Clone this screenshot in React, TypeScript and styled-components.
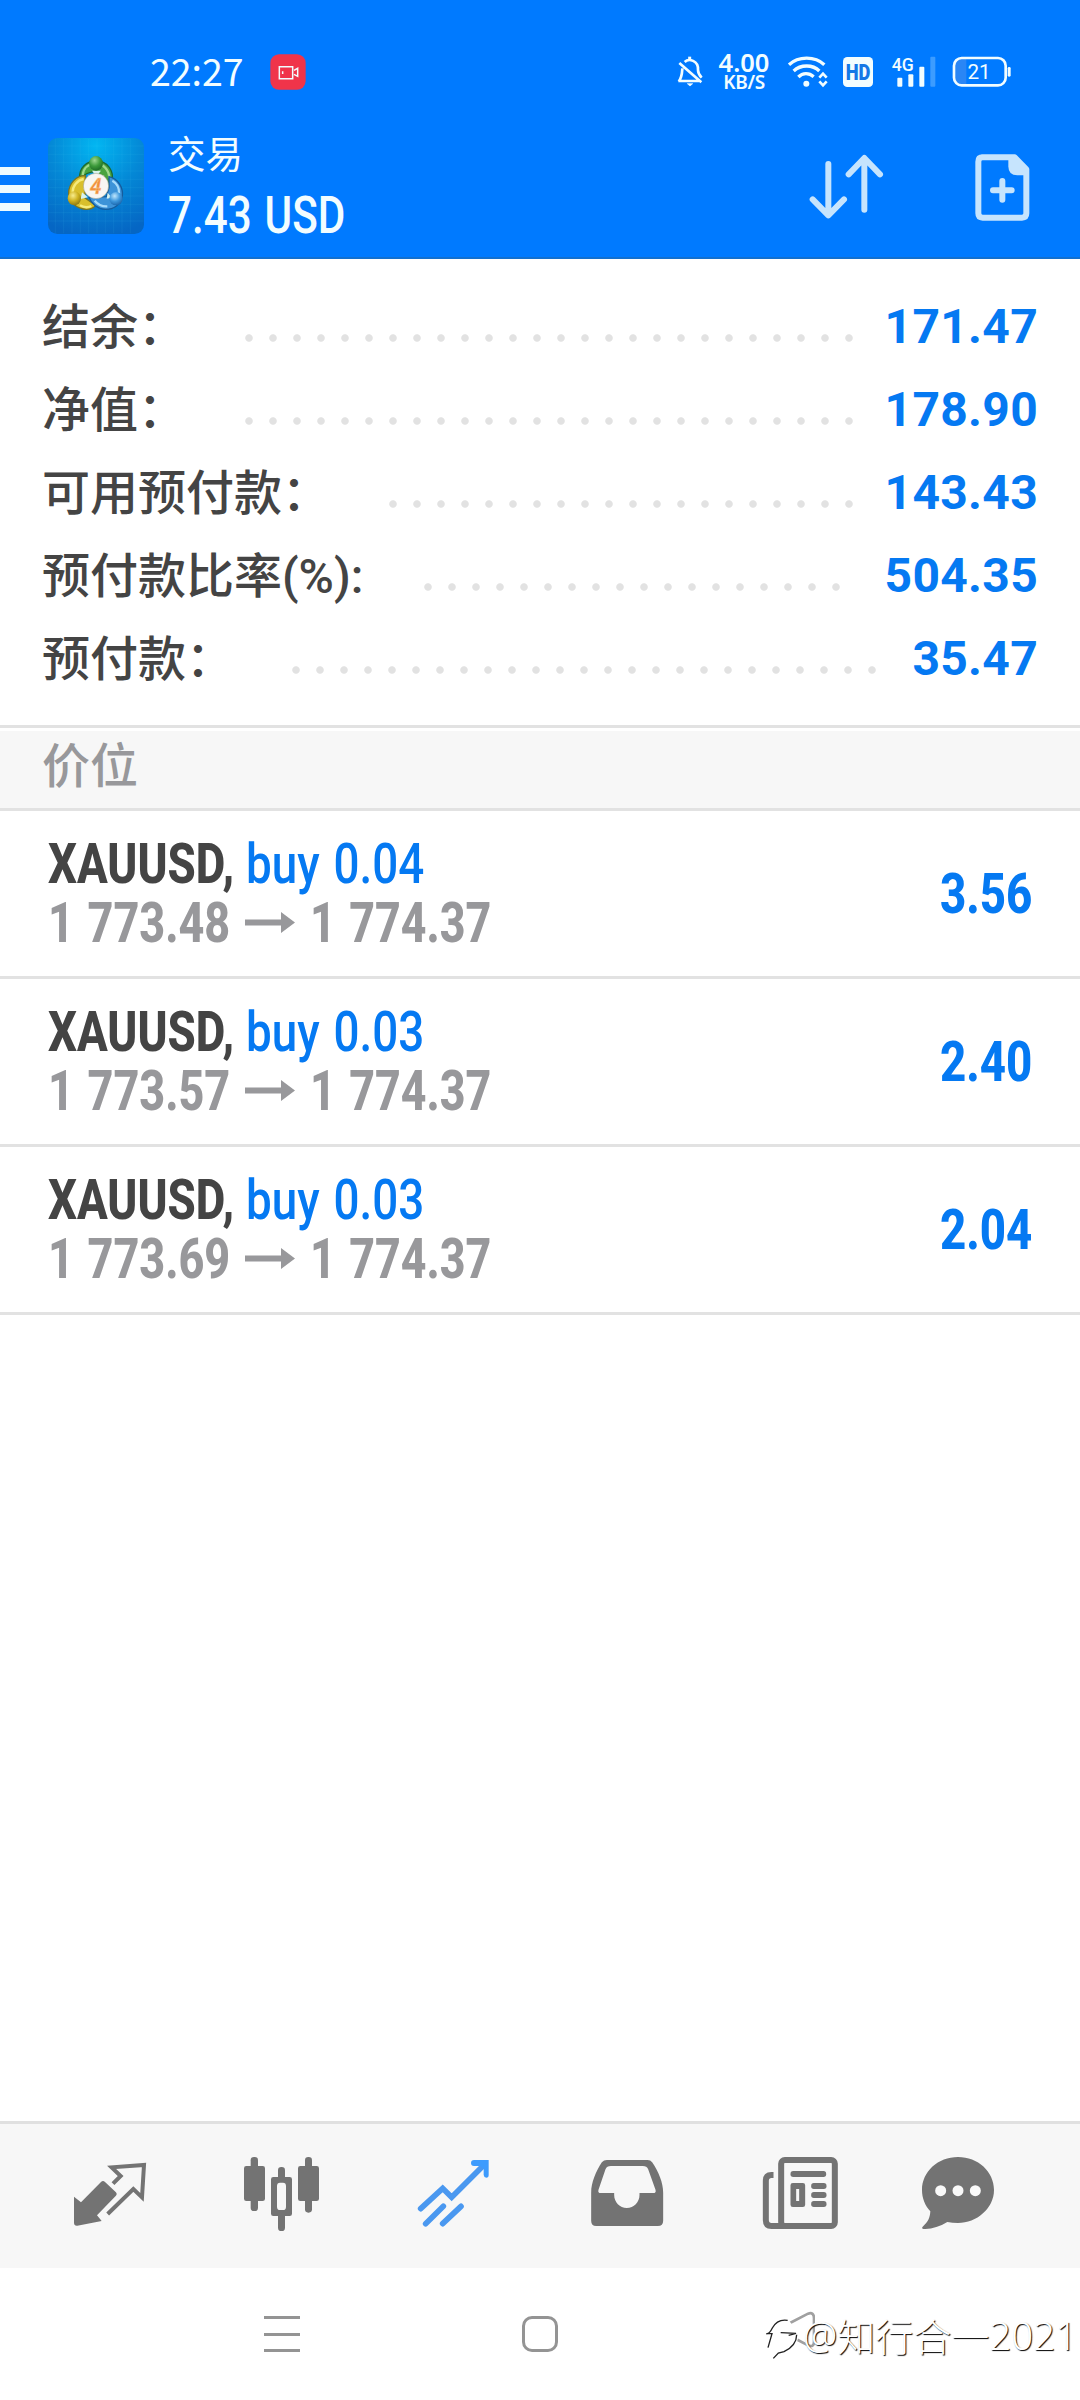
import React, { useLayoutEffect, useRef, useState } from "react";
import styled, { createGlobalStyle } from "styled-components";

const GlobalStyle = createGlobalStyle`
  * { box-sizing: border-box; }
  body { margin: 0; background: #fff; }
`;

const cjk = `"Noto Sans CJK SC", sans-serif`;
const roboto = `Roboto, "Noto Sans CJK SC", sans-serif`;

const Screen = styled.div`
  display: flex;
  flex-direction: column;
  width: 1080px;
  height: 2400px;
  overflow: hidden;
  background: #fff;
  font-family: ${roboto};
`;

/* ---------- condensed text ---------- */

const FitBox = styled.span<{ $w: number }>`
  display: inline-block;
  width: ${(p) => p.$w}px;
  white-space: pre;
`;
const FitInner = styled.span`
  display: inline-block;
  transform-origin: 0 50%;
  word-spacing: 3px;
`;

function Condensed({ width, children }: { width: number; children: React.ReactNode }) {
  const ref = useRef<HTMLSpanElement>(null);
  const [scale, setScale] = useState(0.84);
  useLayoutEffect(() => {
    if (ref.current && ref.current.offsetWidth) setScale(width / ref.current.offsetWidth);
  }, [width, children]);
  return (
    <FitBox $w={width}>
      <FitInner ref={ref} style={{ transform: `scaleX(${scale})` }}>
        {children}
      </FitInner>
    </FitBox>
  );
}

/* ---------- header ---------- */

const Top = styled.header`
  height: 259px;
  flex: none;
  background: #007aff;
  border-bottom: 2px solid #1270cf;
  color: #f2fdff;
`;
const StatusBar = styled.div`
  display: flex;
  align-items: center;
  height: 108px;
  padding: 36px 0 0 150px;
`;
const Clock = styled.span`
  width: 120px;
  padding-bottom: 4px;
  font: 400 37.5px/68px ${cjk};
`;
const StatusIcons = styled.div`
  display: flex;
  align-items: center;
  margin-left: auto;
  padding-right: 68px;
`;
const Speed = styled.div`
  display: flex;
  flex-direction: column;
  align-items: center;
  width: 54px;
  margin: -1px 16px 0 13px;
  font: 600 25.5px/20px "Noto Sans", sans-serif;
`;
const SpeedUnit = styled.span`
  margin-top: 1px;
  font-size: 19px;
  line-height: 19px;
  letter-spacing: -0.3px;
`;
const HeaderRow = styled.div`
  display: flex;
  align-items: flex-start;
  height: 149px;
`;
const Menu = styled.div`
  display: grid;
  gap: 10px;
  width: 30px;
  margin-top: 59px;
`;
const MenuLine = styled.i`
  height: 8px;
  background: #ecfbff;
`;
const AppIcon = styled.svg`
  width: 96px;
  height: 96px;
  margin: 30px 0 0 18px;
`;
const Titles = styled.div`
  display: flex;
  flex-direction: column;
  margin: 21px 0 0 24px;
`;
const Title = styled.div`
  height: 55px;
  font: 400 37.5px/46px ${cjk};
`;
const Profit = styled.div`
  font: 500 51px/64px ${roboto};
`;
const Actions = styled.div`
  display: flex;
  gap: 85px;
  margin: 43.5px 48px 0 auto;
`;

const svgProps = { fill: "none", stroke: "currentColor" };

function StatusBarView() {
  return (
    <StatusBar>
      <Clock>22:27</Clock>
      <svg width="36" height="36" viewBox="810 72 108 108" {...svgProps}>
        <rect x="811" y="73" width="106" height="106" rx="26" fill="#f0344a" stroke="none" />
        <path d="M838 110h40v36h-40zM848 124v8M882 121l11-6v24l-11-6" strokeWidth="4.5" />
      </svg>
      <StatusIcons>
        <svg width="28" height="34" viewBox="50 46 84 102" {...svgProps}>
          <path d="M57 124h62M58 125c10-11 10-22 11-39M76 67c12-12 42-5 40 24 0 10 3 15 11 23M60 70l66 58" strokeWidth="8" />
          <path d="M84 132h16l-8 7z" fill="currentColor" strokeWidth={2} />
          <path d="M91 51v9" strokeWidth="9" />
        </svg>
        <Speed>
          4.00
          <SpeedUnit>KB/S</SpeedUnit>
        </Speed>
        <svg width="41" height="34" viewBox="380 46 123 102" {...svgProps}>
          <path d="M386 75c28-26 78-26 106 0M400 94c21-20 57-20 77 0M414 112c13-13 32-13 46-1" strokeWidth="10" />
          <circle cx="438" cy="132" r="9" fill="currentColor" stroke="none" />
          <path d="M477 114l11-12 11 12M477 125l11 12 11-12" strokeWidth="8" />
        </svg>
        <svg width="30" height="30" viewBox="549 51 90 90" style={{ marginLeft: 15 }}>
          <rect x="549" y="51" width="90" height="90" rx="13" fill="#f2fdff" />
          <text x="594" y="119" textAnchor="middle" fontFamily="Roboto, sans-serif" fontWeight="900" fontSize="64" textLength="74" lengthAdjust="spacingAndGlyphs" fill="#1478e6">
            HD
          </text>
        </svg>
        <svg width="45" height="44" viewBox="692 31 135 132" style={{ marginLeft: 18 }}>
          <text x="694" y="95" fontFamily="Roboto, sans-serif" fontWeight="500" fontSize="56" textLength="66" lengthAdjust="spacingAndGlyphs" fill="#f2fdff">
            4G
          </text>
          <g fill="#f2fdff">
            <rect x="711" y="114" width="15" height="27" rx="3" />
            <rect x="744" y="104" width="15" height="37" rx="3" />
            <rect x="777" y="81" width="15" height="60" rx="3" />
          </g>
          <rect x="810" y="51" width="15" height="90" rx="3" fill="#3c9cff" />
        </svg>
        <svg width="60" height="34" viewBox="877 46 180 102" style={{ marginLeft: 16 }} {...svgProps}>
          <path d="M904 58h16v76h-16c-12 0-17-7-17-17V75c0-10 5-17 17-17" fill="#2a86f5" stroke="none" />
          <rect x="883" y="55" width="155" height="82" rx="23" strokeWidth="8" />
          <rect x="1044" y="82" width="9" height="29" rx="4" fill="currentColor" stroke="none" />
          <text x="958" y="118" textAnchor="middle" fontFamily="Roboto, sans-serif" fontSize="62" fill="#f2fdff" stroke="none">
            21
          </text>
        </svg>
      </StatusIcons>
    </StatusBar>
  );
}

function AppLogo() {
  return (
    <AppIcon viewBox="24 26 288 288">
      <defs>
        <radialGradient id="sky" cx="50%" cy="8%" r="95%">
          <stop offset="0" stopColor="#02b6f2" />
          <stop offset="0.5" stopColor="#0488d6" />
          <stop offset="1" stopColor="#0566c4" />
        </radialGradient>
        <radialGradient id="green" cx="40%" cy="30%" r="80%">
          <stop offset="0" stopColor="#9ed890" />
          <stop offset="0.5" stopColor="#3c9a3a" />
          <stop offset="1" stopColor="#176020" />
        </radialGradient>
        <radialGradient id="gold" cx="40%" cy="30%" r="80%">
          <stop offset="0" stopColor="#f8ec8c" />
          <stop offset="0.5" stopColor="#cdb01e" />
          <stop offset="1" stopColor="#7c6a10" />
        </radialGradient>
        <radialGradient id="azure" cx="40%" cy="30%" r="80%">
          <stop offset="0" stopColor="#bfe6fc" />
          <stop offset="0.5" stopColor="#3d97dc" />
          <stop offset="1" stopColor="#12599f" />
        </radialGradient>
      </defs>
      <rect x="24" y="26" width="288" height="288" rx="28" fill="url(#sky)" />
      <path
        d="M46 28v284M71 28v284M96 28v284M121 28v284M146 28v284M171 28v284M196 28v284M221 28v284M246 28v284M271 28v284M25 50h286M25 75h286M25 100h286M25 125h286M25 150h286M25 175h286M25 200h286M25 225h286M25 250h286M25 275h286"
        stroke="#5cd4f5"
        strokeOpacity="0.14"
        strokeWidth="2"
      />
      <path d="M119 150c-4-36 22-55 50-55 34 0 54 30 47 62-3 17-10 23-18 30l-30-60c-20 0-38 10-49 23z" fill="#49a33f" stroke="#1c6a31" strokeWidth="4" />
      <path d="M128 138c2-22 18-34 38-35 26 0 41 20 42 42" fill="none" stroke="#9fd88c" strokeWidth="7" />
      <path d="M136 139c-28-1-50 25-50 52 0 29 27 49 54 49 15 0 22-6 27-12l-32-22z" fill="#d9bf2c" stroke="#7b7421" strokeWidth="4" />
      <path d="M131 149c-20 4-34 22-33 40M120 228c12 7 24 7 34 2" fill="none" stroke="#f6ea7b" strokeWidth="7" />
      <path d="M207 142c28 7 43 33 40 58-4 26-26 40-50 40-24-1-43-16-50-36l52-2 8-28z" fill="#3c93d8" stroke="#155c9d" strokeWidth="4" />
      <path d="M217 154c14 8 21 22 20 38M164 214c10 12 22 18 38 17" fill="none" stroke="#a5dafa" strokeWidth="7" />
      <path d="M156 124h27l-10 12h-8zM126 189l18 15-22 5zM203 190l12 15-15 3z" fill="#d7f2ee" />
      <ellipse cx="168" cy="102" rx="21" ry="22" fill="url(#green)" />
      <ellipse cx="103" cy="207" rx="20" ry="21" fill="url(#gold)" />
      <ellipse cx="228" cy="208" rx="20" ry="20" fill="url(#azure)" />
      <circle cx="168" cy="170" r="38" fill="#f8f6f3" stroke="#7d7d66" strokeOpacity="0.6" strokeWidth="2" />
      <text x="167" y="193" textAnchor="middle" fontFamily="Roboto, sans-serif" fontStyle="italic" fontWeight="700" fontSize="64" fill="#f0913d" stroke="#fbd3a6" strokeWidth="1">
        4
      </text>
    </AppIcon>
  );
}

/* ---------- account summary ---------- */

const Summary = styled.section`
  flex: none;
  height: 466px;
  padding: 25px 42px 0 42px;
`;
const SummaryRow = styled.div`
  display: flex;
  align-items: center;
  height: 83px;
`;
const Label = styled.span`
  padding-top: 4px;
  font: 500 48px/79px ${roboto};
  color: #444;
`;
const Dots = styled.i<{ $count: number; $gap: number }>`
  width: ${(p) => p.$count * 24}px;
  height: 8px;
  margin: 25px ${(p) => p.$gap}px 0 auto;
  background: radial-gradient(circle at 12px 4px, #e2e2e2 3.3px, transparent 4.2px) 0 0 / 24px 8px repeat-x;
`;
const Value = styled.span`
  padding-top: 2px;
  font: 700 48px/81px ${roboto};
  letter-spacing: 0.3px;
  color: #0579f2;
`;

const summary = [
  { label: "结余：", value: "171.47", dots: 26, gap: 24 },
  { label: "净值：", value: "178.90", dots: 26, gap: 24 },
  { label: "可用预付款：", value: "143.43", dots: 20, gap: 24 },
  { label: "预付款比率(%):", value: "504.35", dots: 18, gap: 37 },
  { label: "预付款：", value: "35.47", dots: 25, gap: 28 },
];

/* ---------- positions ---------- */

const SectionHead = styled.div`
  flex: none;
  height: 86px;
  padding-left: 42px;
  border-top: 3px solid #e2e2e2;
  border-bottom: 3px solid #e2e2e2;
  background: linear-gradient(#fff 3px, #f7f7f7 3px);
  font: 500 48px/69px ${cjk};
  color: #98989b;
`;
const Position = styled.div`
  display: flex;
  align-items: center;
  flex: none;
  height: 168px;
  padding: 0 48px 0 48px;
  border-bottom: 3px solid #e2e2e2;
  font-size: 55px;
  line-height: 59px;
  font-weight: 800;
`;
const Details = styled.div`
  flex: 1;
`;
const Line = styled.div<{ $muted?: boolean }>`
  display: flex;
  align-items: center;
  gap: 12px;
  height: 59px;
  color: ${(p) => (p.$muted ? "#98989b" : "#444")};
`;
const Side = styled.span`
  font-weight: 500;
  color: #0579f2;
`;
const Gain = styled.span`
  padding-top: 2px;
  color: #0579f2;
`;
const Arrow = styled.svg`
  width: 50px;
  height: 21px;
  margin: -2px 3px 0 3px;
`;

const positions = [
  { volume: "0.04", open: "1 773.48", gain: "3.56" },
  { volume: "0.03", open: "1 773.57", gain: "2.40" },
  { volume: "0.03", open: "1 773.69", gain: "2.04" },
];

/* ---------- bottom bars ---------- */

const Spacer = styled.div`
  flex: 1;
`;
const Tabs = styled.nav`
  display: grid;
  grid-template-columns: 172px 172px 172px 173px 173px 144px;
  place-items: center;
  flex: none;
  height: 147px;
  padding-left: 24px;
  border-top: 3px solid #e0e0e0;
  background: #f7f7f7;
`;
const TabIcon = styled.svg<{ $active?: boolean }>`
  width: 90px;
  height: 90px;
  color: ${(p) => (p.$active ? "#4a98f0" : "#737373")};
`;
const SystemNav = styled.div`
  display: flex;
  align-items: flex-start;
  flex: none;
  height: 132px;
  padding-left: 264px;
`;
const Recents = styled.div`
  display: flex;
  flex: none;
  flex-direction: column;
  justify-content: space-between;
  width: 36px;
  height: 36px;
  margin-top: 48px;
`;
const RecentsLine = styled.i`
  height: 3px;
  background: #949494;
`;
const Home = styled.div`
  flex: none;
  width: 36px;
  height: 36px;
  margin: 48px 0 0 222px;
  border: 3px solid #949494;
  border-radius: 10px;
`;
const Watermark = styled.div`
  display: flex;
  flex: none;
  align-items: center;
  height: 56px;
  margin: 39px 0 0 207px;
  color: #fff;
  font: 300 38.5px/56px "Noto Sans", sans-serif;
  text-shadow: 1px 1px 1px #000;
  white-space: nowrap;
`;
const WatermarkName = styled.span`
  font: 300 38px/56px ${cjk};
`;

export default function App() {
  return (
    <Screen>
      <GlobalStyle />
      <Top>
        <StatusBarView />
        <HeaderRow>
          <Menu>
            <MenuLine />
            <MenuLine />
            <MenuLine />
          </Menu>
          <AppLogo />
          <Titles>
            <Title>交易</Title>
            <Profit>
              <Condensed width={177}>7.43 USD</Condensed>
            </Profit>
          </Titles>
          <Actions>
            <svg width="80" height="70" viewBox="440 335 240 210" fill="none" stroke="#c6e4fd" strokeWidth="18" strokeLinecap="round" strokeLinejoin="round">
              <path d="M504 371v152M457 477l47 48 47-48M612 508V356M565 402l47-49 47 49" />
            </svg>
            <svg width="60" height="70" viewBox="935 335 180 210" fill="none" stroke="#c6e4fd">
              <path d="M965 351h98l35 36v132q0 13-13 13H967q-13 0-13-13V364q0-13 13-13z" strokeWidth="18" strokeLinejoin="round" />
              <path d="M1044 352v26q0 27 27 27h28v-20l-33-33z" fill="#c6e4fd" stroke="none" />
              <path d="M1026 422v56M998 450h56" strokeWidth="18" strokeLinecap="round" />
            </svg>
          </Actions>
        </HeaderRow>
      </Top>

      <Summary>
        {summary.map((r) => (
          <SummaryRow key={r.label}>
            <Label>{r.label}</Label>
            <Dots $count={r.dots} $gap={r.gap} />
            <Value>{r.value}</Value>
          </SummaryRow>
        ))}
      </Summary>

      <SectionHead>价位</SectionHead>
      {positions.map((p) => (
        <Position key={p.open}>
          <Details>
            <Line>
              <Condensed width={186}>XAUUSD,</Condensed>
              <Side>
                <Condensed width={178}>{`buy ${p.volume}`}</Condensed>
              </Side>
            </Line>
            <Line $muted>
              <Condensed width={182}>{p.open}</Condensed>
              <Arrow viewBox="0 0 50 21">
                <path d="M0 7.5h36V0l14 10.5L36 21v-7.5H0z" fill="currentColor" />
              </Arrow>
              <Condensed width={181}>1 774.37</Condensed>
            </Line>
          </Details>
          <Gain>
            <Condensed width={92}>{p.gain}</Condensed>
          </Gain>
        </Position>
      ))}

      <Spacer />

      <Tabs>
        <TabIcon viewBox="15 33 270 270">
          <path d="M42 170l21 17 60-61q6-6 12 0l32 30q6 6 0 12l-56 58 14 17-73 14q-10 1-10-9z" fill="currentColor" />
          <path d="M159 131l23-23-27-26 97-7-6 97-26-25-77 75" fill="none" stroke="currentColor" strokeWidth="12" />
        </TabIcon>
        <TabIcon viewBox="531 33 270 270">
          <g fill="currentColor">
            <rect x="552" y="78" width="63" height="105" rx="7" />
            <rect x="572" y="51" width="22" height="162" rx="10" />
            <rect x="714" y="78" width="63" height="105" rx="7" />
            <rect x="735" y="51" width="21" height="167" rx="10" />
            <rect x="654" y="81" width="21" height="40" rx="10" />
            <rect x="654" y="215" width="21" height="58" rx="10" />
            <path fillRule="evenodd" d="M640 111h49q7 0 7 7v103q0 7-7 7h-49q-7 0-7-7V118q0-7 7-7zM660 128q-9 0-9 10v62q0 10 9 10h9q9 0 9-10v-62q0-10-9-10z" />
          </g>
        </TabIcon>
        <TabIcon $active viewBox="1047 33 270 270">
          <g fill="none" stroke="currentColor" strokeWidth="17" strokeLinecap="round">
            <path d="M1082 206l66-61 27 27 99-99" />
            <path d="M1097 251l53-52M1148 251l55-52" />
          </g>
          <path d="M1242 60h44v45q0 8-7 8t-8-8V87l-11-9h-18q-9 0-9-9t9-9z" fill="#3d9bfd" />
        </TabIcon>
        <TabIcon viewBox="4.5 33 270 270">
          <path
            fillRule="evenodd"
            fill="currentColor"
            d="M79 60h122q9 0 14 7c19 27 33 62 33 91v84q0 16-16 16H47q-15 0-15-16v-84c0-29 14-64 32-91q6-7 15-7zM91 78q-12 0-16 10L54 149q-3 10 7 10h40v6c0 22 17 39 38 39s38-17 38-39v-6h41q10 0 7-10l-22-61q-4-10-16-10z"
          />
        </TabIcon>
        <TabIcon viewBox="523.5 33 270 270">
          <g fill="none" stroke="currentColor" strokeWidth="18">
            <rect x="602" y="60" width="161" height="198" rx="11" />
            <path d="M579 105h-6q-17 0-17 17v118q0 18 17 18h40" />
          </g>
          <g fill="currentColor">
            <rect x="630" y="93" width="107" height="18" rx="8" />
            <rect x="692" y="129" width="46" height="18" rx="8" />
            <rect x="692" y="156" width="46" height="18" rx="8" />
            <rect x="692" y="183" width="46" height="18" rx="8" />
            <path fillRule="evenodd" d="M637 129h30q7 0 7 7v58q0 7-7 7h-30q-7 0-7-7v-58q0-7 7-7zM647 147v36h9v-36z" />
          </g>
        </TabIcon>
        <TabIcon viewBox="999 33 270 270">
          <path d="M1134 51c60 0 108 44 108 99s-52 99-108 99q-17 0-32-3c-22 14-44 20-66 21q-14 0-8-7c17-14 22-28 23-46-16-17-25-40-25-64 0-55 48-99 108-99z" fill="currentColor" />
          <g fill="#f9f9f9">
            <circle cx="1082" cy="152" r="16.5" />
            <circle cx="1134" cy="152" r="16.5" />
            <circle cx="1186" cy="152" r="16.5" />
          </g>
        </TabIcon>
      </Tabs>

      <SystemNav>
        <Recents>
          <RecentsLine />
          <RecentsLine />
          <RecentsLine />
        </Recents>
        <Home />
        <Watermark>
          <svg width="50" height="52" viewBox="75 130 150 156" fill="none" style={{ marginRight: -12 }}>
            <path d="M150 172l54-28q18-6 18 14v70q0 18-18 11l-36-19" stroke="#a0a0a0" strokeWidth="8" />
            <path d="M84 246l12-42h-17q9 2 18-17 15-28 50-22l28 34q4 44-43 61l-16 3-14 17" fill="#fff" stroke="none" />
            <path d="M84 246l12-42h-17q9 2 18-17 15-28 46-23M170 207q0 32-38 51l-17 4-15 16M122 201l46 2-22 6" stroke="#222" strokeWidth="4" />
          </svg>
          @<WatermarkName>知行合一</WatermarkName>2021
        </Watermark>
      </SystemNav>
    </Screen>
  );
}
